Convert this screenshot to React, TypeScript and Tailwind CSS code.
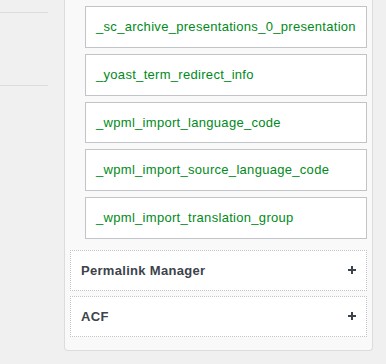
import React from 'react';

const fields = [
  '_sc_archive_presentations_0_presentation',
  '_yoast_term_redirect_info',
  '_wpml_import_language_code',
  '_wpml_import_source_language_code',
  '_wpml_import_translation_group',
];

function Plus() {
  return (
    <svg width="10" height="10" viewBox="0 0 10 10" className="text-[#3c434a]">
      <path d="M5 1v8M1 5h8" stroke="currentColor" strokeWidth="2" />
    </svg>
  );
}

function Section({ title }: { title: string }) {
  return (
    <div className="flex h-[41px] items-center justify-between border border-dotted border-[#c3c4c7] bg-white pl-[10px] pr-[9px]">
      <span className="text-[13px] font-bold tracking-[0.3px] text-[#3c434a]">{title}</span>
      <Plus />
    </div>
  );
}

export default function App() {
  return (
    <div
      className="flex h-[364px] w-[386px] overflow-hidden bg-[#f0f0f0]"
      style={{ fontFamily: '"Liberation Sans", Arial, sans-serif' }}
    >
      <div className="w-[64px] shrink-0">
        <div className="mt-[12px] h-px w-[48px] bg-[#dcdcde]" />
        <div className="mt-[72px] h-px w-[48px] bg-[#dcdcde]" />
      </div>
      <div className="flex h-[351px] w-[309px] shrink-0 flex-col rounded-b-[4px] border border-t-0 border-[#dcdcde] bg-[#f9f9f9] px-[5px]">
        <div className="flex flex-col gap-[6px] pl-[15px] pt-[6px]">
          {fields.map((f) => (
            <div
              key={f}
              className="flex h-[41.75px] items-center border border-[#c3c4c7] bg-white pl-[10px] text-[13px] tracking-[0.3px] text-[#008a20]"
            >
              {f}
            </div>
          ))}
        </div>
        <div className="mt-[11px] flex flex-col gap-[5px]">
          <Section title="Permalink Manager" />
          <Section title="ACF" />
        </div>
      </div>
    </div>
  );
}
